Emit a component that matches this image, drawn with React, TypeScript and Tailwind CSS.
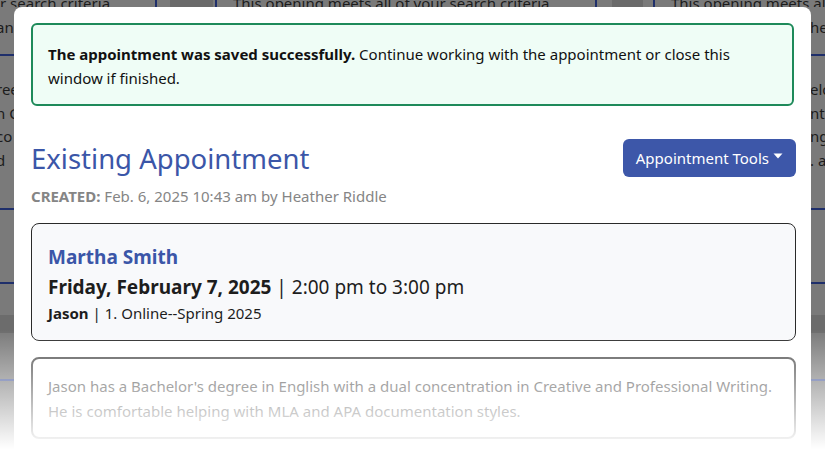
// thin slices of the page that shows round the modal
function SideStrip({ lines, bottom, align }: { lines: string[]; bottom: string[]; align: string }) {
  return (
    <div className="flex h-full w-[14px] flex-none flex-col overflow-hidden text-[15px] leading-[24px] text-[#1c1c1c]">
      <div className={"h-[47px] whitespace-nowrap pt-[8px] " + align}>{lines[0]}</div>
      <div className="h-[2px] bg-[#1f2f6b]" />
      <div className={"h-[152px] whitespace-nowrap pt-[21px] " + align}>
        {bottom.map((b, i) => (
          <div key={i} className="h-[23.5px]">{b}</div>
        ))}
      </div>
      <div className="h-[2px] bg-[#1f2f6b]" />
      <div className="h-[72px]" />
      <div className="h-[2px] bg-[#1f2f6b]" />
      <div className="h-[31px]" />
      <div className="h-[18px] bg-[#6c6c6c]" />
      <div className="h-[46px]" />
      <div className="h-[2px] bg-[#4a5a9a]" />
    </div>
  )
}

export default function App() {
  return (
    <div
      className="relative flex h-[449px] w-[825px] flex-col overflow-hidden bg-[#7a7a7a]"
      style={{ fontFamily: '"Noto Sans", sans-serif' }}
    >
      {/* page behind the overlay: top band */}
      <div className="flex h-[7px] flex-none overflow-hidden text-[15px] leading-[24px] text-[#1c1c1c]">
        <div className="mt-[-9px] w-[155px] flex-none whitespace-nowrap">r search criteria</div>
        <div className="w-[2px] flex-none bg-[#1f2f6b]" />
        <div className="flex w-[58px] flex-none pl-[13px]">
          <div className="w-[43px] bg-[#6a6a6a]" />
        </div>
        <div className="w-[2px] flex-none bg-[#1f2f6b]" />
        <div className="mt-[-9px] w-[378px] flex-none whitespace-nowrap pl-[16px]">
          This opening meets all of your search criteria
        </div>
        <div className="w-[2px] flex-none bg-[#1f2f6b]" />
        <div className="flex w-[56px] flex-none pl-[15px]">
          <div className="w-[31px] bg-[#6a6a6a]" />
        </div>
        <div className="w-[2px] flex-none bg-[#1f2f6b]" />
        <div className="mt-[-9px] flex-none whitespace-nowrap pl-[16px]">This opening meets all of your search criteria</div>
      </div>

      <div className="flex flex-1 justify-between">
        <SideStrip align="text-left ml-[-4px]" lines={["an"]} bottom={["ree", "n C", "co", "d"]} />
        <SideStrip align="text-left ml-[-1px]" lines={["hen"]} bottom={["elo", "nt", "ng", ". a"]} />
      </div>

      {/* modal */}
      <div className="absolute left-[14px] top-[7px] h-[470px] w-[797px] rounded-[8px] bg-white px-[17px] pt-[16px]">
        <div className="rounded-[6px] border-2 border-[#1e8a5a] bg-[#effdf6] px-[15px] pt-[17px] pb-[14px] text-[15px] leading-[24px] text-[#111]">
          <span className="font-bold">The appointment was saved successfully.</span> Continue working with the
          appointment or close this
          <br />
          window if finished.
        </div>

        <div className="mt-[33px] flex items-start justify-between">
          <h1 className="mt-[1px] text-[27.5px] leading-[38px] text-[#3b56a8]">Existing Appointment</h1>
          <button className="mr-[-2px] flex h-[38px] items-center gap-[4px] rounded-[6px] bg-[#3d57a9] px-[13px] text-[15px] text-white">
            Appointment Tools
            <svg width="10" height="6" viewBox="0 0 10 6" className="mt-[-4px]">
              <path d="M0.5 0.5h9L5 5.5z" fill="white" />
            </svg>
          </button>
        </div>

        <div className="mt-[7px] text-[15px] leading-[22px] text-[#858585]">
          <span className="font-bold">CREATED:</span> Feb. 6, 2025 10:43 am by Heather Riddle
        </div>

        <div className="mt-[16px] mr-[-2px] rounded-[8px] border border-[#2a2a2a] bg-[#f8f9fb] px-[16px] pt-[19px] pb-[15px]">
          <div className="text-[19px] font-bold leading-[28px] text-[#3b56a8]">Martha Smith</div>
          <div className="mt-[2px] text-[19px] leading-[28px] text-[#1d1d1d]">
            <span className="font-bold">Friday, February 7, 2025</span> | 2:00 pm to 3:00 pm
          </div>
          <div className="text-[15px] leading-[24px] text-[#1d1d1d]">
            <span className="font-bold">Jason</span> | 1. Online--Spring 2025
          </div>
        </div>

        <div className="mt-[16px] mr-[-2px] rounded-[8px] border-2 border-[#555] px-[15px] pt-[15px] pb-[13px] text-[15px] leading-[25px] text-[#555]">
          Jason has a Bachelor's degree in English with a dual concentration in Creative and Professional Writing.
          <br />
          He is comfortable helping with MLA and APA documentation styles.
        </div>
      </div>

      {/* fade at the bottom of the shot */}
      <div className="pointer-events-none absolute inset-x-0 bottom-0 h-[119px] bg-gradient-to-b from-white/0 to-white" />
    </div>
  )
}
